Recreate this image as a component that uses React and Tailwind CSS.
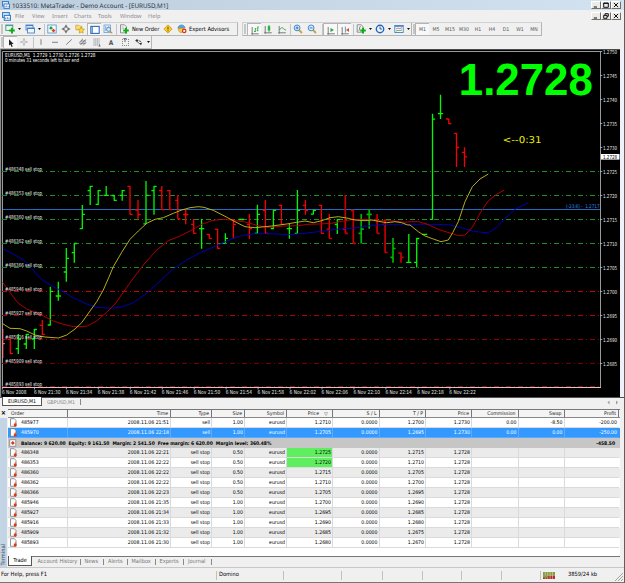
import React from "react";

const at = (ox, oy, list) =>
  list.map(([x, y]) => `${(ox + x / 3).toFixed(1)},${(oy + y / 3).toFixed(1)}`).join(" ");

const fastLine = [
  at(0, 275, [[8,146],[30,160],[60,161],[80,168],[105,180],[135,186],[175,189],[200,180],[225,162],[245,143],[270,108],[290,80],[310,45],[326,8]]),
  at(0, 150, [[340,350],[365,307],[390,268],[415,243],[440,220],[465,208],[490,203],[520,190],[545,180],[570,173],[595,170],[612,172]]),
  at(205, 150, [[0,173],[25,181],[60,199],[90,215],[120,230],[150,233],[200,228],[245,222],[275,217],[300,213],[325,218],[350,212],[375,203],[400,200],[425,204],[450,210],[480,212],[500,210],[520,214],[545,218],[570,215],[590,218],[608,225]]),
  at(410, 90, [[0,405],[25,425],[45,438],[70,447],[93,455],[115,450],[128,428],[145,395],[165,335],[187,290],[210,267],[235,252]]),
].join(" ");

const midLine = [
  at(0, 275, [[8,22],[30,53],[55,85],[80,102],[105,112],[130,123],[160,138],[190,148],[215,154],[240,155],[262,153],[290,138],[320,112],[345,87],[370,52],[400,10]]),
  at(0, 150, [[430,345],[470,300],[505,272],[540,258],[580,238],[610,220]]),
  at(205, 150, [[0,220],[20,212],[50,208],[80,210],[120,216],[160,227],[190,232],[240,228],[280,227],[310,223],[340,222],[380,220],[410,214],[440,209],[480,208],[520,212],[560,212],[600,217]]),
  at(410, 90, [[0,395],[25,395],[50,402],[90,420],[130,432],[145,437],[165,435],[187,412],[210,370],[235,332],[260,313],[283,300]]),
].join(" ");

const slowLine = [
  at(0, 150, [[10,297],[40,312],[70,330],[95,355],[112,375]]),
  at(0, 275, [[130,17],[160,35],[190,50],[220,68],[260,87],[290,97],[330,100],[365,96],[400,83],[440,55],[495,4]]),
  at(0, 150, [[520,357],[560,330],[600,308]]),
  at(205, 150, [[0,302],[40,285],[80,267],[110,257],[150,251],[200,251],[250,254],[300,250],[350,244],[400,237],[450,234],[500,226],[550,223],[600,223]]),
  at(410, 90, [[0,403],[60,403],[115,404],[150,412],[190,424],[235,429],[260,412],[285,385],[315,358],[355,338]]),
].join(" ");

// [x, high, low, open, close, up, dimmed]
const bars = [
  [10.3, 339, 354, 339.3, 353.7, 0],
  [18.3, 334, 354, 348.7, 339.3, 1],
  [26.3, 334, 349, 344, 334.5, 1],
  [34.3, 329, 349, 339, 329.5, 1],
  [42.3, 320, 335, 325.3, 334.3, 0],
  [50.3, 286.7, 325.5, 325, 291.3, 1],
  [58.3, 281.7, 300.7, 296, 296, 1],
  [66.3, 248, 281.7, 272, 258.3, 1],
  [74.3, 243, 262.7, 252.7, 243.5, 1],
  [82.3, 205, 229, 228.7, 214.3, 1],
  [90.2, 186, 205, 190.7, 186.4, 1],
  [98.2, 190, 205, 204.4, 190.6, 1],
  [106.2, 186, 195.7, 195.3, 195.3, 1],
  [114.2, 195, 200.7, 195.5, 200.3, 1],
  [122.2, 190, 200.7, 195.3, 190.6, 1],
  [130, 186, 214.8, 186.4, 214.4, 0],
  [138, 200, 219.5, 210, 214.5, 0],
  [146, 181, 224.3, 223.8, 195.3, 1],
  [154, 186, 214.7, 190.7, 186.4, 1],
  [161.8, 186, 210, 190.7, 209.6, 0],
  [169.8, 190, 210, 190.7, 209.6, 0],
  [177.8, 195, 219.3, 200.3, 219, 0],
  [185.7, 209, 224.3, 214.5, 214.5, 0],
  [193.7, 219, 233.5, 224.3, 233.3, 0],
  [201.6, 219, 248.7, 228.7, 228.7, 1],
  [209.3, 234, 238.7, 234.3, 238.3, 0],
  [217.6, 228.7, 248.7, 229.4, 248.3, 0],
  [225.4, 233.3, 243.5, 243.3, 238.4, 1],
  [233.4, 219.3, 238.7, 219.6, 224.3, 0],
  [241.4, 219, 220, 219.5, 219.5, 1],
  [249.4, 214, 239, 224.3, 228.7, 0],
  [257.4, 204.7, 233.5, 233.3, 214.4, 1],
  [265.4, 200, 233.5, 210.3, 233.3, 0],
  [273.4, 209.7, 229, 228.5, 210.3, 1],
  [281.4, 205, 224.5, 205.4, 224.3, 0],
  [289.4, 224, 238.7, 228.6, 228.6, 1],
  [297.4, 190, 233.6, 233.3, 210.3, 1],
  [305.4, 200, 214.7, 205.3, 210.3, 0],
  [313.4, 209.7, 214.6, 214.2, 210.3, 1],
  [321.4, 205, 233.5, 205.4, 233.3, 0],
  [329.3, 214, 238.6, 229.2, 238.3, 0],
  [337.3, 219.3, 234, 224.3, 219.6, 1],
  [345.3, 195, 233.5, 229.2, 233.3, 0, 1],
  [353.3, 210, 243.5, 210.3, 243.3, 0, 1],
  [361.2, 214, 243.5, 233.3, 229.2, 1, 1],
  [369.2, 209.3, 228.7, 214.4, 214.4, 1, 1],
  [377.1, 214, 233.5, 219.6, 233.3, 0, 1],
  [385.1, 219.3, 252.8, 224.3, 252.5, 0, 1],
  [393, 238, 262.8, 257.4, 248.5, 1, 1],
  [401, 252.5, 262.8, 253.2, 257.4, 0, 1],
  [408.8, 234, 262.8, 262.4, 262.4, 1],
  [416.7, 238, 267.5, 262.3, 238.5, 1],
  [424.6, 234, 235, 234.4, 234.4, 1],
  [432.5, 113.7, 219.8, 219.3, 119.2, 1],
  [440.5, 94.7, 119, 113.6, 113.6, 1],
  [448.8, 118.7, 124, 119, 123.6, 0],
  [456.5, 133, 167, 133.4, 147.5, 0],
  [464.5, 147.3, 167, 152.4, 156.8, 0],
];

const levels = [
  ["#486348 sell stop", 171.5, "#1f8f1f"],
  ["#486353 sell stop", 195.5, "#1f8f1f"],
  ["#486360 sell stop", 219.5, "#1f8f1f"],
  ["#486362 sell stop", 243.5, "#1f8f1f"],
  ["#486366 sell stop", 267.5, "#1f8f1f"],
  ["#485946 sell stop", 291.5, "#c80000"],
  ["#485927 sell stop", 315.5, "#b00000"],
  ["#485916 sell stop", 339.5, "#900000"],
  ["#485909 sell stop", 363.4, "#800000"],
  ["#485893 sell stop", 386.7, "#a01010"],
];

const prices = ["1.2750","1.2745","1.2740","1.2735","1.2730","1.2725","1.2720","1.2715","1.2710","1.2705","1.2700","1.2695","1.2690","1.2685"];
const times = ["6 Nov 2008","6 Nov 21:30","6 Nov 21:34","6 Nov 21:38","6 Nov 21:42","6 Nov 21:46","6 Nov 21:50","6 Nov 21:54","6 Nov 21:58","6 Nov 22:02","6 Nov 22:06","6 Nov 22:10","6 Nov 22:14","6 Nov 22:18","6 Nov 22:22"];

function Label({ x, y, w, children, fill = "#e8e8e8", size = 5.4 }) {
  return (
    <text x={x} y={y} fill={fill} fontSize={size} textLength={w} lengthAdjust="spacingAndGlyphs" xmlSpace="preserve">
      {children}
    </text>
  );
}

function Chart() {
  return (
    <svg width="620" height="348" viewBox="0 49 620 348" className="block shrink-0" fontFamily="'DejaVu Sans Condensed','DejaVu Sans',sans-serif">
      <rect x="0" y="49" width="620" height="348" fill="#000" />
      <rect x="0" y="49" width="620" height="1" fill="#4a4a4a" />
      <rect x="0" y="49" width="1" height="348" fill="#8a8a8a" />
      <rect x="1" y="50" width="1" height="347" fill="#1c1c1c" />
      <path d="M2.5 388V51.5H600.5V387.5" fill="none" stroke="#9a9a9a" />
      {levels.map(([name, y, c]) => (
        <line key={name} x1="2" x2="600" y1={y} y2={y} stroke={c} strokeDasharray="5 3 1 3" />
      ))}
      <line x1="3" x2="600" y1="209.5" y2="209.5" stroke="#1e6fc4" />
      {bars.map(([x, h, l, o, c, up, dim]) => (
        <path
          key={x}
          d={`M${x} ${h}V${l}M${x - 2.6} ${o}H${x}M${x} ${c}H${x + 2.6}`}
          fill="none"
          strokeWidth={dim ? 1.7 : 1.3}
          stroke={up ? (dim ? "#00b400" : "#00f800") : dim ? "#c40000" : "#f80000"}
        />
      ))}
      <path d="M2.8 329V358M2.5 343.7H5" stroke="#ff8080" fill="none" />
      <g fill="none" strokeWidth="0.9">
        <polyline points={slowLine} stroke="#0000c8" />
        <polyline points={midLine} stroke="#c00000" />
        <polyline points={fastLine} stroke="#c8c020" />
      </g>
      {levels.map(([name, y]) => (
        <Label key={name} x="5" y={y - 0.6} w="37">{name}</Label>
      ))}
      <path d="M3 387.5H601" stroke="#dcc4c4" />
      {times.map((t, i) => (
        <g key={t}>
          <path d={`M${2.5 + i * 31.95} 387V389.5`} stroke="#ccc" strokeWidth="0.8" />
          <Label x={2 + i * 31.95} y="394" w={i ? 26.5 : 24.5}>{t}</Label>
        </g>
      ))}
      {prices.map((p, i) => (
        <g key={p}>
          <path d={`M600 ${51.5 + i * 24}H602.3`} stroke="#bbb" strokeWidth="0.8" />
          <Label x="603" y={53.6 + i * 24} w="14.2">{p}</Label>
        </g>
      ))}
      <rect x="601" y="154" width="18.5" height="5.6" fill="#fff" />
      <Label x="603" y="158.8" w="14.2" fill="#000">1.2728</Label>
      <Label x="5" y="57.3" w="90.5" fill="#fff">{"EURUSD,M1  1.2729 1.2730 1.2726 1.2728"}</Label>
      <Label x="5" y="62.3" w="74" fill="#fff">0 minutes 31 seconds left to bar end</Label>
      <Label x="566" y="208.3" w="33.5" fill="#3490ec" size="5.2">(-23.6) -  1.2717</Label>
      <text x="502.8" y="142.8" fill="#f0f000" fontSize="9.4" textLength="38.8" lengthAdjust="spacingAndGlyphs">{"<--0:31"}</text>
      <text x="458.8" y="94.8" fill="#00ff00" fontSize="45" fontWeight="bold" textLength="134" lengthAdjust="spacingAndGlyphs" className="[font-family:'Liberation_Sans',Arial,sans-serif]">1.2728</text>
    </svg>
  );
}

/* ---------- toolbar icons ---------- */
const Ico = ({ children, s = 10 }) => (
  <svg width={s} height={s} viewBox="0 0 10 10" fill="none" className="shrink-0">{children}</svg>
);
const Plus = () => <path d="M7 3.8V9.4M4.2 6.6H9.8" stroke="#0fae18" strokeWidth="2" />;
const NewChart = () => <Ico><rect x=".8" y="1" width="7" height="5.5" fill="#e8f6ec" stroke="#4a9a70" strokeWidth=".9" /><path d="M.8 1.6h7" stroke="#4b8cc4" /><Plus /></Ico>;
const Profiles = () => <Ico><rect x="1" y="1" width="7" height="5" fill="#d7e8fa" stroke="#4b86c8" strokeWidth=".9" /><rect x="2.5" y="4" width="7" height="5" fill="#eef5fd" stroke="#4b86c8" strokeWidth=".9" /><path d="M1 1.5h7M2.5 4.5h7" stroke="#3f7fc6" /></Ico>;
const Market = () => <Ico><rect x=".8" y="1" width="8.4" height="8" fill="#f5fbff" stroke="#5a9cd8" strokeWidth=".9" /><path d="M4 2l2 2.2-2 1.6-2-1.6z" fill="#22a33a" /><path d="M6.5 4.8l2 1.6-2 2-2-2z" fill="#e8401c" /></Ico>;
const Target = () => <Ico><circle cx="5" cy="5" r="2.4" stroke="#666" strokeWidth=".8" /><path d="M5 .8v3M5 6.2v3M.8 5h3M6.2 5h3" stroke="#444" strokeWidth="1" /></Ico>;
const Navigator = () => <Ico><path d="M.8 1.2h3l1 1h2v3.6h-6z" fill="#f6df7c" stroke="#c59d2a" strokeWidth=".7" /><path d="M6.2 3l1 2 2.3.3-1.7 1.6.4 2.2-2-1-2 1 .4-2.2-1.7-1.6 2.3-.3z" fill="#ffd83a" stroke="#c08a10" strokeWidth=".6" /></Ico>;
const Panel = () => <Ico><rect x=".8" y="1.4" width="8.4" height="7" fill="#fff" stroke="#2c6cc0" strokeWidth="1.1" /><path d="M2.2 2v6" stroke="#5f9be0" strokeWidth="1.6" /></Ico>;
const Tester = () => <Ico><rect x="1" y="1" width="6.5" height="7.6" fill="#e2eefb" stroke="#6f9fd0" strokeWidth=".8" /><path d="M2.5 2v5M4 3v4M5.6 2v5" stroke="#7aa6d8" strokeWidth=".7" /><circle cx="5.6" cy="5.4" r="2" fill="#d4ecfb" stroke="#477eaf" strokeWidth=".8" /><path d="M7 7l2.2 2.3" stroke="#c0953a" strokeWidth="1.2" /></Ico>;
const Order = () => <Ico><path d="M1.5.8h4l2 2v6h-6z" fill="#f7f7f7" stroke="#777" strokeWidth=".8" /><path d="M2.6 3h2.6M2.6 4.6h3" stroke="#999" strokeWidth=".6" /><Plus /></Ico>;
const Alert = () => <Ico><path d="M5 .9L9.1 5 5 9.1.9 5z" fill="#f9cd26" stroke="#c8951a" strokeWidth=".8" /><path d="M5 2.8v2.8M5 6.4v1" stroke="#6a4a00" strokeWidth="1" /></Ico>;
const Expert = () => <Ico><path d="M1 4.4C1 1.8 3 1 4.5 1s3.4 1 3.4 2.6z" fill="#5aa7e2" stroke="#3277b4" strokeWidth=".6" /><path d="M1.2 4.4h6L4.6 8.8C2.4 8.6 1.2 7 1.2 4.4z" fill="#f3c843" stroke="#b98a1c" strokeWidth=".5" /><circle cx="7.2" cy="6.9" r="2.3" fill="#e0301c" /><rect x="6.3" y="6" width="1.8" height="1.8" fill="#fff" /></Ico>;
const Axes = () => <path d="M2.2 2v6.8h6.6M1.2 8.8h1M2.2 9.8v-1" stroke="#606060" strokeWidth=".8" />;
const BarsI = () => <Ico><Axes /><path d="M4 6.5h1.3M5.3 7V3.2M5.3 3.6h1M7.8 1.6v4.6M6.8 5.6h1M7.8 2h.9" stroke="#23a13a" strokeWidth=".9" /></Ico>;
const CandleI = () => <Ico><Axes /><path d="M6 1v6.8" stroke="#178a2e" strokeWidth=".8" /><rect x="4.8" y="2.2" width="2.4" height="4.2" fill="#20b53c" /></Ico>;
const LineI = () => <Ico><Axes /><path d="M2.4 6C4 3.6 5 3.2 6 4.2S8 6 9 6" stroke="#23a13a" strokeWidth=".9" /></Ico>;
const ZoomI = ({ minus }) => <Ico><path d="M6 6l3 3" stroke="#cfa22e" strokeWidth="1.8" /><circle cx="4.1" cy="3.9" r="2.9" fill="#dff0fc" stroke="#3d88d0" strokeWidth="1" /><path d={minus ? "M2.6 3.9h3" : "M2.6 3.9h3M4.1 2.4v3"} stroke="#2769b4" strokeWidth=".9" /></Ico>;
const ScrollI = () => <Ico><Axes /><path d="M4.5 3v4L8 5z" fill="#25a63c" /></Ico>;
const ShiftI = () => <Ico><Axes /><path d="M5.4 1.6v6" stroke="#4b7fb5" strokeWidth=".8" /><path d="M9 3v4L6 5z" fill="#d8502c" /></Ico>;
const Indic = () => <Ico><path d="M1.2.8h4l1.8 1.8v5.6H1.2z" fill="#f3f3f3" stroke="#777" strokeWidth=".8" /><path d="M4.6 2.6c-1.2 0-1 .8-1 1.8s0 2-1 2" stroke="#444" strokeWidth=".7" /><Plus /></Ico>;
const Clock = () => <Ico><circle cx="5" cy="5" r="3.7" fill="#e9f4ff" stroke="#1f66bd" strokeWidth="1.4" /><path d="M5 2.6V5h2" stroke="#335" strokeWidth=".8" /></Ico>;
const Template = () => <Ico><rect x=".8" y="1.5" width="8.4" height="7" fill="#f6faff" stroke="#4383c8" strokeWidth=".9" /><path d="M.8 2.2h8.4" stroke="#4383c8" strokeWidth="1.2" /><path d="M2 5l2-1 1.8.6L8 3.8" stroke="#c44" strokeWidth=".7" /><path d="M2 7.2l2-.9 2 .4 2-.8" stroke="#2a9040" strokeWidth=".7" /></Ico>;

const Cursor = () => <Ico><path d="M3 1.2v6.4l1.5-1.2 1 2.5 1.2-.5-1-2.4h2z" fill="#222" /></Ico>;
const Cross = () => <Ico><path d="M5 1.4v2.8M5 5.8v2.8M1.4 5h2.8M5.8 5h2.8" stroke="#888" strokeWidth=".9" /></Ico>;
const VLine = () => <Ico><path d="M5 2.2v5.6" stroke="#666" strokeWidth=".8" /></Ico>;
const HLine = () => <Ico><path d="M2 5.3h6" stroke="#666" strokeWidth=".8" /></Ico>;
const Diag = () => <Ico><path d="M2.2 7.6l5.6-5.2" stroke="#666" strokeWidth=".8" /></Ico>;
const Channel = () => <Ico><path d="M1.4 5.4l3.6-3.6M2.4 8l5.4-5.6M5 8.4l3-3M1.4 6.2h6.2M3 4h5" stroke="#666" strokeWidth=".8" /></Ico>;
const Fibo = () => <Ico><path d="M1.4 2h6.8M1.4 4h6.8M1.4 6h6.8M1.4 8h5" stroke="#777" strokeWidth=".8" strokeDasharray="1.2 .5" /><path d="M7.4 7v2.4M6.6 9h2" stroke="#555" strokeWidth=".7" /></Ico>;
const Arrows = () => <Ico><path d="M1.2 3.8l1.8-1.8 1.6 1.8L3 5z" fill="#333" /><path d="M5 6.2l3.2-.6-1.2 2.6z" fill="#333" /><path d="M3.4 4.8l1.8 1.8M5 3.8l2 .8" stroke="#444" strokeWidth=".9" /></Ico>;

const Slot = ({ children, on }) => (
  <div className={on ? "flex h-[12px] w-[14px] shrink-0 items-center justify-center border-t border-l border-[#b4b4b4] bg-[#f8f8f8]" : "flex h-[12px] w-[14px] shrink-0 items-center justify-center"}>{children}</div>
);
const Drop = () => (
  <div className="flex w-[4px] shrink-0 items-center justify-center">
    <svg width="3" height="2" viewBox="0 0 3 2"><path d="M0 0h3L1.5 2z" fill="#111" /></svg>
  </div>
);
const Sep = () => <div className="flex w-[2px] shrink-0 justify-center"><div className="h-[11px] w-px bg-[#c4c4c4]" /></div>;
const Grip = () => <div className="h-[10px] w-[2px] shrink-0 border-x border-[#c6c6c6]" />;
const Group = ({ children, className }) => (
  <div className={"flex h-[14px] shrink-0 items-center border-t border-r border-b border-t-[#d0d0d0] border-r-[#b4b4b4] border-b-[#b4b4b4] " + className}>{children}</div>
);

const AppMark = ({ s = 8 }) => (
  <svg width={s} height={s} viewBox="0 0 8 8" fill="none" className="shrink-0">
    <rect x=".5" y=".5" width="6" height="4.4" fill="#d6e8fb" stroke="#2f78c4" strokeWidth=".9" />
    <rect x="2" y="3" width="5.5" height="4.4" fill="#fff" stroke="#2f78c4" strokeWidth=".9" />
    <path d="M3.2 6.4V5M4.7 6.4V4.4M6.2 6.4V5" stroke="#2f78c4" strokeWidth=".7" />
  </svg>
);

function WinButton({ d }) {
  return (
    <div className="flex h-[8px] w-[10px] items-center justify-center border-t border-l border-r border-b border-t-white border-l-white border-r-[#707070] border-b-[#707070] bg-[#ecebe6]">
      <svg width="6" height="6" viewBox="0 0 6 6" fill="none" stroke="#111" strokeWidth="1"><path d={d} /></svg>
    </div>
  );
}
const MIN = "M.8 5h3.2", MAX = "M.7 1h4.6v4.3H.7zM.7 1.4h4.6", CLOSE = "M.9.9l4.2 4.2M5.1.9L.9 5.1", RESTORE = "M2 2V.7h3.3v2.6H4M.7 2.4H4v2.9H.7z";

const menus = [["File", "w-[17px]"], ["View", "w-[20px]"], ["Insert", "w-[22px]"], ["Charts", "w-[24px]"], ["Tools", "w-[22px]"], ["Window", "w-[28px]"], ["Help", "w-[20px]"]];

function Header() {
  return (
    <>
      <div className="flex h-[10px] shrink-0 items-center justify-between bg-gradient-to-r from-[#bccddd] to-[#d3e2f0] pl-[2px] pr-[2px]">
        <div className="flex items-center gap-[2px] font-['Noto_Sans'] text-[6.3px] leading-[8px] text-[#2a3440]">
          <AppMark />
          <span className="pt-[2px]">1033510: MetaTrader - Demo Account - [EURUSD,M1]</span>
        </div>
        <div className="flex pr-[1px]"><WinButton d={MIN} /><WinButton d={MAX} /><WinButton d={CLOSE} /></div>
      </div>
      <div className="flex h-[12px] shrink-0 items-center justify-between pl-[2px] pr-[3px]">
        <div className="flex items-center font-['Noto_Sans'] text-[5.7px] text-[#8a8a8a]">
          <div className="w-[13px]"><AppMark s={9} /></div>
          {menus.map(([m, w]) => <span key={m} className={"pt-[2px] " + w}>{m}</span>)}
        </div>
        <div className="flex"><WinButton d={MIN} /><WinButton d={RESTORE} /><WinButton d={CLOSE} /></div>
      </div>
      <div className="flex h-[14px] shrink-0 items-center text-[5.7px]">
        <Group className="w-[238px] pl-[1px]">
          <Grip />
          <Slot><NewChart /></Slot><Drop /><div className="w-[2px]" />
          <Slot><Profiles /></Slot><Drop /><div className="w-[2px]" /><Sep />
          <Slot><Market /></Slot><Slot><Target /></Slot><Slot><Navigator /></Slot><Slot on><Panel /></Slot><Slot><Tester /></Slot>
          <Sep />
          <Slot><Order /></Slot>
          <span className="w-[30px] shrink-0 pt-[3px] pl-px whitespace-nowrap text-black">New Order</span>
          <Slot><Alert /></Slot><Slot><Expert /></Slot>
          <span className="pt-[3px] whitespace-nowrap text-black">Expert Advisors</span>
        </Group>
        <Group className="ml-[4px] w-[170px] border-l border-l-[#d0d0d0] pl-[1px]">
          <Grip /><div className="w-px" />
          <Slot on><BarsI /></Slot><Slot><CandleI /></Slot><Slot><LineI /></Slot><Sep />
          <Slot><ZoomI /></Slot><Slot><ZoomI minus /></Slot><div className="w-[2px]" /><Sep />
          <Slot on><ScrollI /></Slot><Slot on><ShiftI /></Slot><div className="w-px" /><Sep />
          <Slot><Indic /></Slot><Drop /><div className="w-px" />
          <Slot><Clock /></Slot><Drop /><div className="w-px" />
          <Slot><Template /></Slot><Drop />
        </Group>
        <Group className="w-[130px] pl-[1px] text-[5.2px] text-[#555]">
          <Grip /><div className="w-px" />
          {["M1", "M5", "M15", "M30", "H1", "H4", "D1", "W1", "MN"].map((t) => <Slot key={t} on={t === "M1"}><span className="pt-[3px]">{t}</span></Slot>)}
        </Group>
      </div>
      <div className="flex h-[13px] shrink-0 items-center">
        <div className="flex h-[13px] w-[152px] items-center border-r border-b border-[#b8b8b8] pl-[1px]">
          <Grip />
          <Slot on><Cursor /></Slot><Slot><Cross /></Slot><div className="w-px" /><Sep />
          <Slot><VLine /></Slot><Slot><HLine /></Slot><Slot><Diag /></Slot><Slot><Channel /></Slot><Slot><Fibo /></Slot>
          <Slot><span className="pt-[2px] text-[6.5px] font-bold text-[#555]">A</span></Slot>
          <Slot><span className="flex size-[7px] items-center justify-center border border-dotted border-[#888] text-[5.5px] font-bold text-[#666]">T</span></Slot>
          <Slot><Arrows /></Slot><Drop />
        </div>
      </div>
    </>
  );
}

/* ---------- terminal ---------- */
const cols = "grid grid-cols-[60px_103px_41px_33px_42px_46px_46.5px_46.5px_46px_46.5px_46px_54.5px]";
const heads = ["Order", "Time", "Type", "Size", "Symbol", "Price", "S / L", "T / P", "Price", "Commission", "Swap", "Profit"];
const rows = [
  ["485977", "21:51", "sell", "1.00", "1.2710", "1.2700", "1.2730", "0.00", "-8.50", "-200.00"],
  ["485970", "22:18", "sell", "1.00", "1.2705", "1.2695", "1.2730", "0.00", "0.00", "-250.00"],
  null,
  ["486348", "22:21", "sell stop", "0.50", "1.2725", "1.2715", "1.2728"],
  ["486353", "22:22", "sell stop", "0.50", "1.2720", "1.2710", "1.2728"],
  ["486360", "22:22", "sell stop", "0.50", "1.2715", "1.2705", "1.2728"],
  ["486362", "22:22", "sell stop", "0.50", "1.2710", "1.2700", "1.2728"],
  ["486366", "22:23", "sell stop", "0.50", "1.2705", "1.2695", "1.2728"],
  ["485946", "21:35", "sell stop", "1.00", "1.2700", "1.2690", "1.2728"],
  ["485927", "21:34", "sell stop", "1.00", "1.2695", "1.2685", "1.2728"],
  ["485916", "21:33", "sell stop", "1.00", "1.2690", "1.2680", "1.2728"],
  ["485909", "21:32", "sell stop", "1.00", "1.2685", "1.2675", "1.2728"],
  ["485893", "21:30", "sell stop", "1.00", "1.2680", "1.2670", "1.2728"],
];

const Doc = () => (
  <svg width="9" height="9" viewBox="0 0 9 9" fill="none" className="shrink-0">
    <path d="M1.5.7h3.8l1.7 1.8v5.8H1.5z" fill="#fdfdfd" stroke="#777" strokeWidth=".8" />
    <path d="M6.4 3.9l1.2 1.5-1.2 1.2-1.2-1.2z" fill="#ef7a52" /><circle cx="6.2" cy="7" r="1.5" fill="#d43a1c" />
  </svg>
);

function Row({ r, i }) {
  const sel = i === 1;
  const bg = sel ? "bg-[#3399ff] text-white" : i === 0 || i % 2 === 0 ? "bg-white" : "bg-[#ebebeb]";
  const cells = ["2008.11.06 " + r[1], r[2], r[3], "eurusd", r[4], "0.0000", r[5], r[6], r[7], r[8], r[9]];
  return (
    <div className={`${cols} h-[10px] ${bg}`}>
      <div className={`flex h-[10px] items-center gap-[3px] border-r border-b pl-[1px] ${sel ? "border-[#5aaaff]" : "border-[#dadada]"}`}><Doc /><span className="pt-[2px]">{r[0]}</span></div>
      {cells.map((c, k) => (
        <div
          key={k}
          className={`flex h-[10px] items-center justify-end border-b pt-[2px] ${k < 10 ? "border-r pr-[1px]" : "pr-[2px]"} ${sel ? "border-[#5aaaff]" : "border-[#dadada]"} ${k === 4 && (i === 3 || i === 4) ? "bg-[#5fee5f]" : ""}`}
        >{c}</div>
      ))}
    </div>
  );
}

const tabs = [["Account History", "w-[47px]"], ["News", "w-[23.5px]"], ["Alerts", "w-[23.5px]"], ["Mailbox", "w-[28px]"], ["Experts", "w-[28.5px]"], ["Journal", "w-[28px]"]];

function Terminal() {
  return (
    <div className="flex h-[158px] shrink-0">
      <div className="flex w-[7px] shrink-0 flex-col items-center">
        <span className="h-[9px] pt-px text-[7px] leading-[7px] font-bold text-black">×</span>
        <div className="flex w-[7px] flex-1 items-end justify-center bg-[#c3d4e5]">
          <span className="mb-px rotate-180 pr-px text-[5.7px] leading-[6px] text-[#3d4a5a] [writing-mode:vertical-rl]">Terminal</span>
        </div>
      </div>
      <div className="ml-[1px] flex w-[612px] flex-col overflow-hidden border-t border-[#777] bg-white">
        <div className={`${cols} h-[8px] shrink-0 border-b border-[#888] bg-[#f4f4f4] text-[#222]`}>
          {heads.map((h, k) => (
            <div key={k} className={`flex h-[7px] items-center border-r border-[#777] pt-[2px] ${k ? "justify-end pr-[2px]" : "pl-[3px]"}`}>
              {h}
              {k === 5 && <svg width="4" height="4" viewBox="0 0 4 4" className="mr-[2px] mb-px ml-[5px]"><path d="M.3.5h3.4L2 3.6z" fill="none" stroke="#999" strokeWidth=".6" /></svg>}
            </div>
          ))}
        </div>
        <div className="shrink-0 text-black">
          {rows.map((r, i) =>
            r ? <Row key={i} r={r} i={i} /> : (
              <div key={i} className="flex h-[10px] items-center bg-[#c6c6c6] pl-[1px] font-bold">
                <svg width="8" height="8" viewBox="0 0 8 8" fill="none"><rect x=".8" y=".8" width="6" height="6.4" fill="#fff" stroke="#777" strokeWidth=".7" /><path d="M3.8 2l2 2-2 2-2-2z" fill="#d83a1c" /></svg>
                <span className="ml-[4px] pt-[2px] text-[4.91px] whitespace-pre">{"Balance: 9 620.00  Equity: 9 161.50  Margin: 2 541.50  Free margin: 6 620.00  Margin level: 360.48%"}</span>
                <span className="ml-auto pt-[2px] pr-[5px] text-[4.91px]">-458.50</span>
              </div>
            )
          )}
        </div>
        <div className="h-[8px] shrink-0" />
        <div className="flex h-[11px] shrink-0 items-start border-t border-[#777] bg-[#f0f0f0] text-[5.6px] text-[#777]">
          <div className="-mt-px flex h-[10px] w-[24px] items-center justify-center border-r border-b border-l border-[#555] bg-white pt-[2px] text-black">Trade</div>
          <div className="flex h-[10px] items-center pl-[4.5px]">
            {tabs.map(([t, w]) => (
              <div key={t} className={`flex shrink-0 items-center justify-between whitespace-nowrap ${w}`}>
                <span className="pt-[2px] pl-[1px]">{t}</span><span className="mr-[3px] h-[6px] w-px bg-[#888]" />
              </div>
            ))}
          </div>
        </div>
      </div>
    </div>
  );
}

const StatusSep = () => <div className="h-[9px] w-px bg-[#c0c0c0]" />;

export default function App() {
  return (
    <div className="flex h-[583px] w-[625px] overflow-hidden bg-[#f0f0f0] text-[5.15px] leading-none [font-family:'DejaVu_Sans_Condensed','DejaVu_Sans',sans-serif] [text-rendering:geometricPrecision]">
      <div className="flex w-[624px] shrink-0 flex-col">
        <Header />
        <div className="flex shrink-0"><Chart /><div className="flex-1 bg-[#eef1fa]" /></div>
        <div className="flex h-[12px] shrink-0 items-start justify-between border-t border-[#505050] text-[5.5px]">
          <div className="flex items-start">
            <div className="-mt-px ml-[2px] flex h-[9px] w-[40px] items-center justify-center border-r border-b border-l border-[#555] bg-white pt-[3px] text-[5.2px] text-black">EURUSD,M1</div>
            <div className="flex h-[8px] items-center gap-[5px] pl-[5px] text-[5.2px] text-[#888]"><span className="pt-[3px]">GBPUSD,M1</span><span className="h-[6px] w-px bg-[#888]" /></div>
          </div>
          <svg width="12" height="5" viewBox="0 0 12 5" className="mt-[2px] mr-[5px]"><path d="M2.5.5v4L.5 2.5zM9 .5v4l2-2z" fill="#999" /></svg>
        </div>
        <Terminal />
        <div className="flex h-[15px] shrink-0 items-center border-t border-[#c8c8c8] text-[5.7px] text-black">
          <span className="w-[216px] pt-[2px] pl-[1px]">For Help, press F1</span><StatusSep />
          <span className="w-[66px] pt-[2px] pl-[2px]">Domino</span><StatusSep />
          <div className="w-[57px]" /><StatusSep /><div className="w-[40px]" /><StatusSep /><div className="w-[39px]" /><StatusSep /><div className="w-[38px]" /><StatusSep /><div className="w-[39px]" /><StatusSep /><div className="w-[38px]" /><StatusSep />
          <svg width="12" height="7" viewBox="0 0 12 7" className="ml-[2px]">
            <rect width="12" height="3" fill="#7aa23a" /><rect y="3" width="12" height="4" fill="#b03030" />
            <path d="M2.3 0v7M4.7 0v7M7.1 0v7M9.5 0v7M0 3.4h12" stroke="#e8e0c8" strokeWidth=".5" />
            <path d="M0 4.6h4.6" stroke="#7aa23a" strokeWidth="2" />
          </svg>
          <span className="ml-[13px] pt-[2px] whitespace-nowrap">3859/24 kb</span>
          <svg width="8" height="8" viewBox="0 0 8 8" className="mt-[4px] mr-[1px] ml-auto"><path d="M0 8l8-8M3 8l5-5M6 8l2-2" stroke="#999" strokeWidth=".9" /></svg>
        </div>
        <div className="h-px shrink-0 bg-[#777]" />
      </div>
      <div className="w-px bg-[#606060]" />
    </div>
  );
}
